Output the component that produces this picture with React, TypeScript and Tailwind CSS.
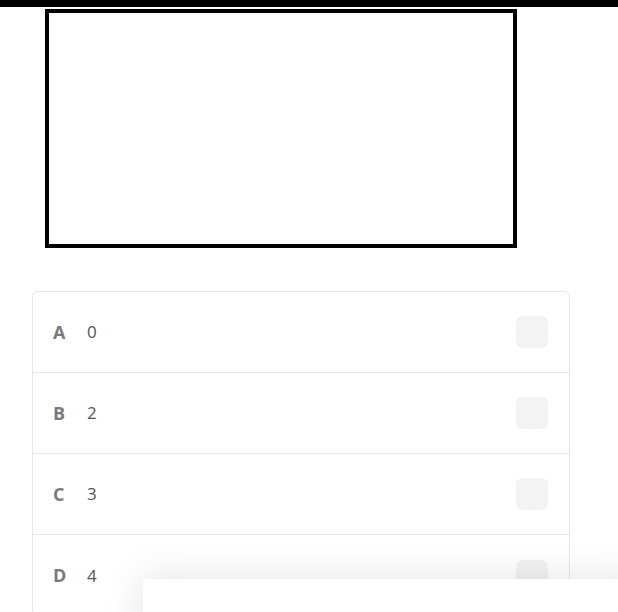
const options = [
  { letter: "A", value: "0" },
  { letter: "B", value: "2" },
  { letter: "C", value: "3" },
  { letter: "D", value: "4" },
];

const App = () => {
  return (
    <div
      className="relative h-[612px] w-[618px] overflow-hidden bg-white"
      style={{ fontFamily: '"Open Sans", sans-serif' }}
    >
      <div className="h-[7px] bg-black" />

      <div className="ml-[45px] mt-[2px] h-[239px] w-[472px] border-4 border-black bg-white" />

      <div className="ml-[32px] mt-[43px] w-[538px] rounded-md border border-[#e6e6e6] bg-white">
        {options.map((opt, i) => (
          <div
            key={opt.letter}
            className={`flex h-[81px] items-center pl-[20px] pr-[21px] ${
              i < options.length - 1 ? "border-b border-[#e6e6e6]" : ""
            }`}
          >
            <span className="w-[34px] text-[18px] font-bold text-[#7a7a7a]">{opt.letter}</span>
            <span className="text-[17px] text-[#555555]">{opt.value}</span>
            <div className="ml-auto h-[32px] w-[32px] rounded-md bg-[#f3f3f3]" />
          </div>
        ))}
      </div>

      <div className="absolute left-[143px] top-[579px] h-[60px] w-[500px] bg-white shadow-[0_0_40px_rgba(0,0,0,0.12)]" />
    </div>
  );
};

export default App;
